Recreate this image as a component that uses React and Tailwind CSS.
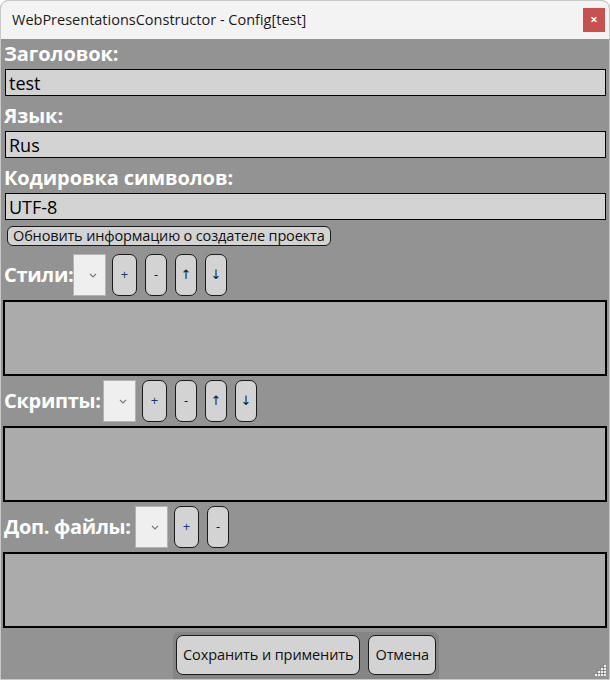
import React from "react";

const FONT = { fontFamily: '"Open Sans", "Noto Sans", "DejaVu Sans", sans-serif' };

function Label({ children, className = "" }) {
  return (
    <div className={"text-[20px] font-bold text-white leading-[30px] pl-[3px] tracking-[-0.1px] " + className}>
      {children}
    </div>
  );
}

function Field({ value }) {
  return (
    <div className="ml-[4px] mr-[3px] mb-[5px] h-[27px] border-[1.5px] border-black bg-[#d3d3d3] flex items-center px-[3px] text-[18px] text-black leading-none">
      {value}
    </div>
  );
}

function Combo() {
  return (
    <div className="w-[33px] h-[42px] shrink-0 bg-[#efefef] border-[1.5px] border-[#b3b3b3] flex items-center justify-end pr-[8px]">
      <svg width="8" height="5" viewBox="0 0 8 5">
        <path d="M1 1 L4 4 L7 1" fill="none" stroke="#777" strokeWidth="1.1" />
      </svg>
    </div>
  );
}

function SmallBtn({ children, w = "w-[24px]", color = "text-[#1a1a1a]" }) {
  return (
    <div className={w + " " + color + " h-[42px] rounded-[7px] border-[1.5px] border-[#1a1a1a] bg-[#d3d3d3] flex items-center justify-center text-[13px]"}>
      {children}
    </div>
  );
}

function ToolRow({ label, labelW, buttons }) {
  return (
    <div className="flex items-center h-[42px] my-[4px]">
      <div className={labelW + " shrink-0 whitespace-nowrap text-[20px] font-bold text-white pl-[3px] tracking-[-0.3px]"}>{label}</div>
      <Combo />
      <div className="flex gap-[8px] ml-[6px]">
        {buttons.map((b, i) => (
          <SmallBtn key={i} w={b.w} color={b.c}>{b.t}</SmallBtn>
        ))}
      </div>
    </div>
  );
}

function ListArea() {
  return <div className="mx-[2px] h-[76px] border-2 border-black bg-[#ababab]" />;
}

export default function App() {
  const full = [
    { t: "+", w: "w-[25px]", c: "text-[#1a3570]" },
    { t: "-", w: "w-[22px]", c: "text-[#1a1a1a]" },
    { t: "↑", w: "w-[22px]", c: "text-[#1a1a1a]" },
    { t: "↓", w: "w-[22px]", c: "text-[#1a1a1a]" },
  ];
  return (
    <div className="w-[610px] h-[680px] overflow-hidden flex flex-col bg-[#939393] border border-[#c8c8c8] rounded-t-[8px]" style={FONT}>
      {/* title bar */}
      <div className="h-[38px] shrink-0 bg-[#f3f3f3] flex items-center justify-between pl-[11px] pr-[4px]">
        <span className="text-[14.5px] text-[#1a1a1a]">WebPresentationsConstructor - Config[test]</span>
        <div className="w-[22px] h-[24px] bg-[#c85050] flex items-center justify-center text-white text-[13px] font-bold">×</div>
      </div>

      <div className="flex-1 flex flex-col relative">
        <Label>Заголовок:</Label>
        <Field value="test" />
        <Label>Язык:</Label>
        <Field value="Rus" />
        <Label>Кодировка символов:</Label>
        <Field value="UTF-8" />

        <div className="mt-[1px] ml-[6px] self-start h-[20px] px-[5px] rounded-[6px] border-[1.5px] border-[#1a1a1a] bg-[#d3d3d3] flex items-center text-[14.5px] text-[#111] tracking-[-0.15px]">
          Обновить информацию о создателе проекта
        </div>

        <div className="mt-[4px]" />
        <ToolRow label="Стили:" labelW="w-[72px]" buttons={full} />
        <ListArea />
        <ToolRow label="Скрипты:" labelW="w-[102px]" buttons={full} />
        <ListArea />
        <ToolRow label="Доп. файлы:" labelW="w-[134px]" buttons={full.slice(0, 2)} />
        <ListArea />

        <div className="flex-1 flex justify-center items-end pt-[3px]">
          <div className="ml-[2px] bg-[#858585] rounded-t-[6px] px-[3px] pt-[3px] pb-[4px] flex gap-[8px]">
            <div className="h-[40px] px-[6px] rounded-[7px] border-[1.5px] border-[#1a1a1a] bg-[#d3d3d3] flex items-center text-[14.5px] text-[#111] tracking-[-0.1px]">
              Сохранить и применить
            </div>
            <div className="h-[40px] px-[6px] rounded-[7px] border-[1.5px] border-[#1a1a1a] bg-[#d3d3d3] flex items-center text-[14.5px] text-[#111] tracking-[-0.1px]">
              Отмена
            </div>
          </div>
        </div>

        {/* resize grip */}
        <svg className="absolute right-[2px] bottom-[2px]" width="14" height="14" viewBox="0 0 14 14">
          {[[12, 3], [9, 6], [12, 6], [6, 9], [9, 9], [12, 9], [3, 12], [6, 12], [9, 12], [12, 12]].map(([x, y], i) => (
            <g key={i}>
              <rect x={x - 1} y={y - 1} width="2" height="2" fill="#ffffff" opacity="0.85" />
              <rect x={x - 2} y={y - 2} width="1" height="1" fill="#7a7a7a" />
            </g>
          ))}
        </svg>
      </div>
    </div>
  );
}
